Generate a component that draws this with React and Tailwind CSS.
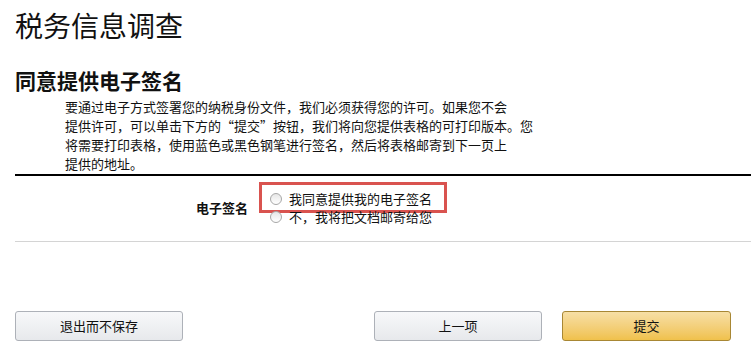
const font = { fontFamily: '"Noto Sans CJK SC", "Liberation Sans", sans-serif' };

const Radio = () => (
  <span className="inline-block w-[12px] h-[12px] rounded-full border border-[#a7a7a7] bg-gradient-to-b from-[#e6e6e6] to-[#ffffff] shrink-0" />
);

const App = () => {
  return (
    <div className="w-[756px] h-[347px] bg-white text-[#111] overflow-hidden" style={font}>
      <div className="px-[15px]">
        <h1 className="text-[28px] leading-[34px] pt-[8px] text-[#111] font-normal">税务信息调查</h1>

        <h2 className="text-[21px] leading-[26px] font-bold mt-[25px] text-[#111]">同意提供电子签名</h2>

        <p className="pl-[50px] text-[13px] leading-[19px] mt-[4px] text-[#111] whitespace-nowrap">
          要通过电子方式签署您的纳税身份文件，我们必须获得您的许可。如果您不会<br />
          提供许可，可以单击下方的{'\u201c'}提交{'\u201d'}按钮，我们将向您提供表格的可打印版本。您<br />
          将需要打印表格，使用蓝色或黑色钢笔进行签名，然后将表格邮寄到下一页上<br />
          提供的地址。
        </p>

        <div className="w-[736px] h-[2px] bg-black mt-[1px]" />

        <div className="flex items-start h-[65px] pt-[6px]">
          <div className="w-[244px] text-right text-[13px] font-bold pr-[11px] pt-[16px]">电子签名</div>
          <div className="flex flex-col">
            <div className="flex items-center gap-[7px] border-[3px] border-[#d9534f] pl-[8px] pr-[10px] pt-[3px] h-[31px] w-[188px]">
              <Radio />
              <span className="text-[13px] leading-[16px]">我同意提供我的电子签名</span>
            </div>
            <div className="flex items-center gap-[7px] pl-[11px] -mt-[4px]">
              <Radio />
              <span className="text-[13px] leading-[16px]">不，我将把文档邮寄给您</span>
            </div>
          </div>
        </div>

        <div className="w-[736px] h-[1px] bg-[#d4d4d4]" />

        <div className="flex mt-[69px]">
          <button className="w-[168px] h-[30px] rounded-[3px] border border-[#adb1b8] bg-gradient-to-b from-[#f7f8fa] to-[#e7e9ec] text-[13px] text-[#111]">
            退出而不保存
          </button>
          <button className="ml-[191px] w-[168px] h-[30px] rounded-[3px] border border-[#adb1b8] bg-gradient-to-b from-[#f7f8fa] to-[#e7e9ec] text-[13px] text-[#111]">
            上一项
          </button>
          <button className="ml-[20px] w-[169px] h-[30px] rounded-[3px] border border-[#a88734] bg-gradient-to-b from-[#f7dfa5] to-[#f0c14b] text-[13px] text-[#111]">
            提交
          </button>
        </div>
      </div>
    </div>
  );
};

export default App;
